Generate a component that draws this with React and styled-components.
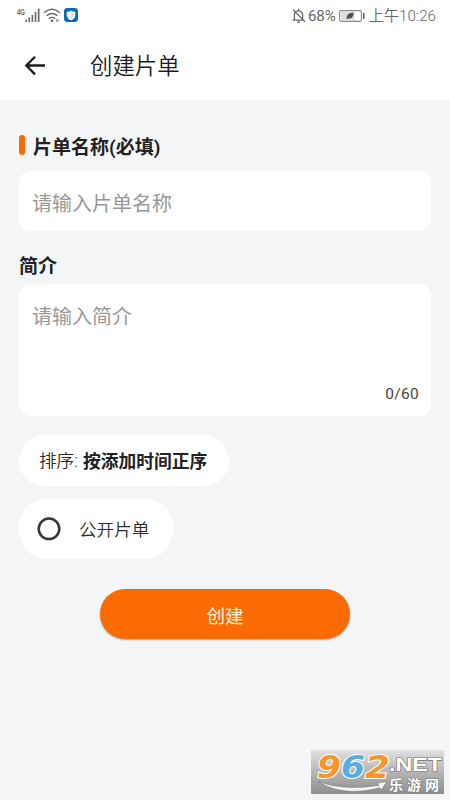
import { useState } from 'react';
import styled, { createGlobalStyle } from 'styled-components';

function App() {

  const [name, setName] = useState('');
  const [intro, setIntro] = useState('');
  const [isPublic, setIsPublic] = useState(false);

  return (
    <Screen>
      <GlobalStyle />
      <Top>
        <StatusBar>
          <StatusGroup>
            <SignalIcons />
          </StatusGroup>
          <StatusGroup>
            <BellOff />
            <Percent>68%</Percent>
            <Battery />
            <Clock>上午10:26</Clock>
          </StatusGroup>
        </StatusBar>
        <TitleBar>
          <BackButton aria-label="返回">
            <svg width="22" height="22" viewBox="0 0 22 22" fill="none" stroke="#1c1c1c" strokeWidth="2.3">
              <path d="M11 1.8 2.3 10.5l8.7 8.9M2.5 10.5H21" />
            </svg>
          </BackButton>
          <Title>创建片单</Title>
        </TitleBar>
      </Top>

      <Form>
        <Label>
          <Mark />
          片单名称(必填)
        </Label>
        <NameInput placeholder="请输入片单名称" value={name} onChange={(e) => setName(e.target.value)} />
        <Label $second>简介</Label>
        <IntroBox>
          <IntroInput placeholder="请输入简介" maxLength={60} value={intro} onChange={(e) => setIntro(e.target.value)} />
          <Counter>{intro.length}/60</Counter>
        </IntroBox>
        <SortPill>
          排序:<strong>按添加时间正序</strong>
        </SortPill>
        <PublicPill onClick={() => setIsPublic(!isPublic)}>
          <Radio viewBox="0 0 24 24">
            <circle cx="12" cy="12.8" r="10.3" fill="none" stroke="#40342f" strokeWidth="2.5" />
            {isPublic && <circle cx="12" cy="12.8" r="6" fill="#fb6b02" />}
          </Radio>
          公开片单
        </PublicPill>
        <Submit>创建</Submit>
      </Form>

      <Watermark />
    </Screen>
  )
}

function SignalIcons() {
  return (
    <svg width="64" height="18" viewBox="0 0 64 18">
      <text x="0" y="8" fontFamily="'Liberation Sans', sans-serif" fontSize="9" fontWeight="700" fill="#666" textLength="8" lengthAdjust="spacingAndGlyphs">4G</text>
      <g fill="#686868">
        <rect x="8.4" y="12.6" width="1.5" height="2.4" />
        <rect x="11.5" y="10.2" width="1.6" height="4.8" />
        <rect x="14.6" y="7.8" width="1.6" height="7.2" />
        <rect x="17.7" y="4.8" width="1.6" height="10.2" />
        <rect x="20.8" y="1.6" width="1.7" height="13.4" />
      </g>
      <g fill="none" stroke="#686868" strokeWidth="1.4">
        <path d="M27 5.8q8-7 16 0" />
        <path d="M29.6 8.8q5.4-4.6 10.8 0" />
        <path d="M32 11.6q3-2.4 6 0" />
      </g>
      <circle cx="35" cy="13.8" r="1.4" fill="#686868" />
      <path d="m40.4 11.5-1.8 2 1.8 2z" fill="#686868" />
      <path d="m41.5 11.5 1.6 2-1.6 2z" fill="#bbb" />
      <rect x="47" y="1" width="14" height="14" rx="3.4" fill="#0a6cb4" />
      <path d="M54 3.4c1.4 1 2.8 1.4 4.3 1.5v3.3c0 2.4-1.8 4-4.3 5.1-2.5-1.1-4.3-2.7-4.3-5.1V4.9c1.5-.1 2.9-.5 4.3-1.5z" fill="#fff" />
      <path d="M54 5.1c1 .6 1.8.9 2.8 1v2.2c0 1.6-1 2.7-2.8 3.5z" fill="#c8e4f3" />
    </svg>
  )
}

function BellOff() {
  return (
    <svg width="14" height="16" viewBox="0 0 14 16" fill="none" stroke="#686868" strokeWidth="1.3">
      <path d="M.7 12.2h11.6M2.4 12V6.8Q2.6 3 6.5 2.6 10.4 3 10.6 6.8V12M1 1.6l12 12.2M6.5 1v1.6M5 14.2h3" />
    </svg>
  )
}

function Battery() {
  return (
    <svg width="26" height="12" viewBox="0 0 26 12">
      <rect x=".6" y=".6" width="21.8" height="10.8" rx="1.8" fill="#fff" stroke="#858585" strokeWidth="1.1" />
      <path d="M2 2h13.6v8H2z" fill="#ddd" />
      <path d="M7.6 9.5C7.4 5 9 3 14.5 2.5 14.5 7.2 12.6 9 9 8.5z" fill="#505050" />
      <rect x="24" y="3" width="1.5" height="6" fill="#686868" />
    </svg>
  )
}

function Watermark() {
  return (
    <WatermarkBox>
      <svg width="133" height="44" viewBox="0 0 133 44">
        <defs>
          <linearGradient id="plate" x1="0" y1="0" x2="0" y2="1">
            <stop offset="0" stopColor="#e0e0e0" />
            <stop offset="1" stopColor="#8d8d8d" />
          </linearGradient>
        </defs>
        <rect width="133" height="44" fill="url(#plate)" />
        <g fontFamily="'DejaVu Sans', sans-serif" fontSize="31.5" fontWeight="700" fontStyle="italic" stroke="#fff" strokeWidth="2" paintOrder="stroke">
          <text x="6" y="27.6" fill="#f7962b" textLength="24" lengthAdjust="spacingAndGlyphs">9</text>
          <text x="30" y="27.6" fill="#58aee0" textLength="24" lengthAdjust="spacingAndGlyphs">6</text>
          <text x="54" y="27.6" fill="#f7962b" textLength="25" lengthAdjust="spacingAndGlyphs">2</text>
        </g>
        <path d="M7 31.5Q32 41 68 35.4l-1.5-2.2 9.5-2-5.5 8.6-1.8-2Q32 47.5 7 31.5z" fill="#f4f4f4" stroke="#777" strokeWidth=".6" />
        <g fill="#fff" stroke="#777" strokeWidth="1.1" paintOrder="stroke" fontWeight="700">
          <text x="78" y="21.2" fontFamily="'Liberation Sans', sans-serif" fontSize="17.5" textLength="53" lengthAdjust="spacingAndGlyphs">.NET</text>
          <text x="78" y="40" fontFamily="'Liberation Sans', 'Noto Sans CJK SC', sans-serif" fontSize="14" textLength="50" lengthAdjust="spacing">乐游网</text>
        </g>
      </svg>
    </WatermarkBox>
  )
}

const GlobalStyle = createGlobalStyle`
  * {
    box-sizing: border-box;
  }
  body {
    margin: 0;
    background: #f4f5f7;
    font-family: Roboto, 'Noto Sans CJK SC', sans-serif;
  }
  input, textarea, button {
    border: 0;
    padding: 0;
    background: none;
    font-family: inherit;
    outline: none;
  }
  svg {
    display: block;
    overflow: visible;
  }
`;

const Screen = styled.div`
  position: relative;
  width: 450px;
  height: 800px;
  overflow: hidden;
  background: #f4f5f7;
`;

const Top = styled.header`
  height: 100px;
  background: #fff;
`;

const StatusBar = styled.div`
  display: flex;
  justify-content: space-between;
  height: 31px;
  padding: 0 14px 0 17px;
  color: #686868;
`;

const StatusGroup = styled.div`
  display: flex;
  align-items: center;
`;

const Percent = styled.span`
  margin: 0 3px 0 2px;
  font-size: 15px;
`;

const Clock = styled.span`
  margin-left: 4px;
  font-size: 15.2px;
  font-weight: 350;
  line-height: 20px;
`;

const TitleBar = styled.div`
  display: flex;
  align-items: center;
  height: 69px;
  padding-left: 24px;
`;

const BackButton = styled.button`
  width: 22px;
  height: 22px;
`;

const Title = styled.h1`
  margin: 0 0 0 44px;
  color: #1c1c1c;
  font-size: 22.4px;
  font-weight: 350;
  line-height: 32px;
`;

const Form = styled.main`
  display: flex;
  flex-direction: column;
  align-items: flex-start;
  padding: 31px 19px 0;
`;

const Label = styled.label`
  display: flex;
  align-items: center;
  height: 28px;
  margin: ${(props) => (props.$second ? '19px 0 6px' : '0 0 12px')};
  color: #222;
  font-size: 19px;
  font-weight: 700;
`;

const Mark = styled.span`
  width: 6px;
  height: 20px;
  margin-right: 8px;
  border-radius: 3px;
  background: #fb6b02;
`;

const NameInput = styled.input`
  width: 412px;
  height: 60px;
  padding: 5px 13px 0;
  border-radius: 12px;
  background: #fff;
  color: #222;
  font-size: 20px;
  &::placeholder {
    color: #999;
  }
`;

const IntroBox = styled.div`
  display: flex;
  flex-direction: column;
  width: 412px;
  height: 132px;
  padding: 18px 12px 12px 13px;
  border-radius: 12px;
  background: #fff;
`;

const IntroInput = styled.textarea`
  flex: 1;
  resize: none;
  color: #222;
  font-size: 20px;
  line-height: 30px;
  &::placeholder {
    color: #999;
  }
`;

const Counter = styled.span`
  align-self: flex-end;
  color: #4a4540;
  font-size: 15.5px;
  line-height: 20px;
  letter-spacing: 0.3px;
`;

const Pill = styled.button`
  display: flex;
  align-items: center;
  padding-bottom: 2px;
  background: #fff;
  color: #2c2c2c;
  font-size: 17.6px;
  font-weight: 350;
`;

const SortPill = styled(Pill)`
  width: 210px;
  height: 51px;
  margin-top: 19px;
  padding-left: 20px;
  border-radius: 26px;
  strong {
    margin-left: 5px;
    color: #222;
    font-size: 17.8px;
    font-weight: 700;
  }
`;

const PublicPill = styled(Pill)`
  width: 154px;
  height: 60px;
  margin-top: 13px;
  padding-left: 18px;
  border-radius: 28px;
`;

const Radio = styled.svg`
  width: 24px;
  height: 24px;
  margin-right: 18px;
`;

const Submit = styled.button`
  align-self: center;
  width: 250px;
  height: 50px;
  margin-top: 30px;
  border-radius: 25px;
  background: #fb6b02;
  box-shadow: 0 1px 2px rgba(0, 0, 0, 0.3);
  color: #fff5e6;
  font-size: 18.6px;
`;

const WatermarkBox = styled.div`
  position: absolute;
  right: 6px;
  bottom: 6px;
`;

export default App
